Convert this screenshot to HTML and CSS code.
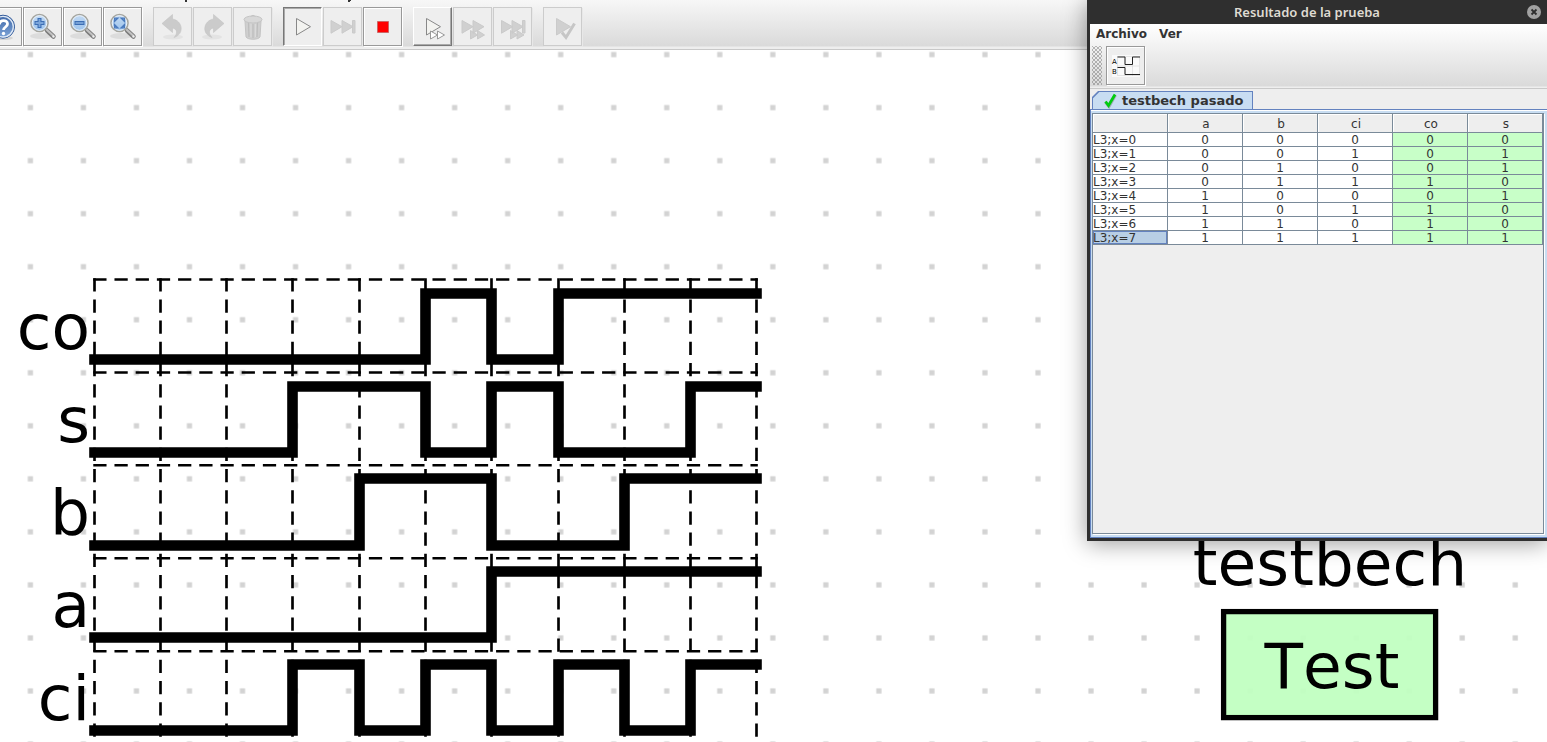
FILE: index.html
```html
<!DOCTYPE html>
<html lang="es">
<head>
<meta charset="utf-8">
<title>Resultado de la prueba</title>
<link rel="stylesheet" href="styles.css">
</head>
<body>
<svg class="defs" width="0" height="0" aria-hidden="true">
  <defs>
    <linearGradient id="lens" x1="0" y1="0" x2="0" y2="1"><stop offset="0" stop-color="#c3daf3"/><stop offset="1" stop-color="#9cc3ec"/></linearGradient>
    <linearGradient id="help" x1="0" y1="0" x2="0" y2="1"><stop offset="0" stop-color="#3f68a8"/><stop offset="1" stop-color="#7fa5d8"/></linearGradient>
    <g id="magnifier">
      <ellipse cx="18" cy="29" rx="11" ry="3" fill="#dcdcdc"/>
      <path d="M24 23.500L30.500 29.500" stroke="#7d7d7d" stroke-width="4.500" stroke-linecap="round"/>
      <path d="M24 23L30 28.500" stroke="#c2c2c2" stroke-width="2.200" stroke-linecap="round"/>
      <circle cx="30.500" cy="29.500" r="1.200" fill="#eee"/>
      <circle cx="16.500" cy="16" r="8.500" fill="url(#lens)" stroke="#a5a59e" stroke-width="1.600"/>
      <circle cx="16.500" cy="16" r="7.300" fill="none" stroke="#eef3f8" stroke-width="1"/>
    </g>
  </defs>
</svg>

<div class="app">
  <header class="toolbar">
    <svg class="menu-edge" viewBox="0 0 400 2" aria-hidden="true"><path d="M185 0h2v2h-2zM348 0h3v1h-1v1h-2z" fill="#333"/></svg>
    <button class="tool" aria-label="Ayuda"><svg viewBox="1 1 37 37"><ellipse cx="20" cy="31" rx="10" ry="2" fill="#d4d4d4"/><circle cx="20" cy="19.700" r="11.500" fill="url(#help)" stroke="#2f5797"/><circle cx="20" cy="19.700" r="10.300" fill="none" stroke="#dfe9f5" stroke-width="1.300"/><path d="M16.500 17.500c0-5 8-5 8-.5 0 3-4 3-4 6" fill="none" stroke="#fff" stroke-width="2.800"/><circle cx="20.500" cy="26.500" r="1.700" fill="#fff"/></svg></button>
    <button class="tool" aria-label="Ampliar"><svg viewBox="1 1 37 37"><use href="#magnifier"/><path d="M16.500 11v10M11.500 16h10" stroke="#3c6eb4" stroke-width="4"/><path d="M16.500 12v8M12.500 16h8" stroke="#7ba5da" stroke-width="1.800"/></svg></button>
    <button class="tool" aria-label="Reducir"><svg viewBox="1 1 37 37"><use href="#magnifier"/><path d="M11.500 16h10" stroke="#3c6eb4" stroke-width="4"/><path d="M12.500 16h8" stroke="#7ba5da" stroke-width="1.800"/></svg></button>
    <button class="tool" aria-label="Ajustar"><svg viewBox="1 1 37 37"><use href="#magnifier"/><path d="M11.500 14.500v-3.500h3.500zM21.500 14.500v-3.500h-3.500zM11.500 17.500v3.500h3.500zM21.500 17.500v3.500h-3.500z" fill="#6b98d0" stroke="#4a7abd" stroke-width="1.200"/></svg></button>

    <button class="tool off apart" disabled aria-label="Deshacer"><svg viewBox="1 1 37 37"><ellipse cx="20" cy="30" rx="10" ry="2.500" fill="#e3e3e3"/><path d="M9 16.500L19.500 7.500v4.500c10 1.500 12.500 15 1.500 18.500 4-4 3-9-1.500-9.500v4.500z" fill="#cbcbcb" stroke="#c4c4c4" stroke-width=".6"/></svg></button>
    <button class="tool off" disabled aria-label="Rehacer"><svg viewBox="1 1 37 37"><ellipse cx="19" cy="30" rx="10" ry="2.500" fill="#e3e3e3"/><path d="M31 16.500L20.500 7.500v4.500c-10 1.500-12.500 15-1.500 18.500-4-4-3-9 1.500-9.500v4.500z" fill="#cbcbcb" stroke="#c4c4c4" stroke-width=".6"/></svg></button>
    <button class="tool off" disabled aria-label="Eliminar"><svg viewBox="1 1 37 37"><path d="M12 14l1 16c2 3 12 3 14 0l1-16z" fill="#cfcfcf" stroke="#c4c4c4"/><path d="M15.500 16l.5 14M20 17v14M24.500 16l-.5 14" stroke="#bdbdbd" stroke-width="1.200"/><path d="M18 16v14M22.500 17v13" stroke="#dadada"/><ellipse cx="20" cy="12.500" rx="9" ry="3.500" fill="#d8d8d8" stroke="#c4c4c4"/><path d="M18 9.500c0-1.500 4-1.500 4 0" fill="none" stroke="#c4c4c4"/></svg></button>

    <button class="tool pressed apart" aria-label="Iniciar"><svg viewBox="1 1 37 37"><path d="M13.500 11.500L27.500 19.700L13.500 28z" fill="#f3f3f0" stroke="#888"/></svg></button>
    <button class="tool off" disabled aria-label="Paso"><svg viewBox="1 1 37 37"><path d="M8 13.500l11 6.200-11 6.500zM19 13.500l11 6.200-11 6.500zM29.500 13.500h2.500v12.500h-2.500z" fill="#d0d0d0" stroke="#cacaca"/></svg></button>
    <button class="tool" aria-label="Detener"><svg viewBox="1 1 37 37"><path d="M14.500 14.500h11v11h-11z" fill="#f00" stroke="#c66"/></svg></button>

    <button class="tool raised apart" aria-label="Ejecutar"><svg viewBox="1 1 37 37"><path d="M13.500 11.500L27.500 19.700L13.500 28z" fill="#f3f3f0" stroke="#888"/><path d="M17.500 24l7 4-7 4zM24.500 24l7 4-7 4z" fill="#fff" stroke="#999"/></svg></button>
    <button class="tool off" disabled aria-label="Avanzar"><svg viewBox="1 1 37 37"><path d="M9 13.500l11 6.200-11 6.500zM20 13.500l11 6.200-11 6.500zM17.500 23.500l7 4.500-7 4zM24.500 23.500l7 4.500-7 4z" fill="#d0d0d0" stroke="#cacaca"/></svg></button>
    <button class="tool off" disabled aria-label="Avanzar hasta el final"><svg viewBox="1 1 37 37"><path d="M8.500 13.500l11 6.200-11 6.500zM19 13.500l11 6.200-11 6.500zM29.500 13.500h2.500v12.500h-2.500zM17.500 23.500l7 4.500-7 4zM24 23.500l7 4.500-7 4z" fill="#d0d0d0" stroke="#cacaca"/></svg></button>

    <button class="tool off apart" disabled aria-label="Ejecutar pruebas"><svg viewBox="1 1 37 37"><path d="M13.500 11.500L27.500 19.700L13.500 28z" fill="#d0d0d0" stroke="#cacaca"/><path d="M19 25.500l4 5 8.500-14" fill="none" stroke="#c6c6c6" stroke-width="3"/></svg></button>
  </header>

  <main class="canvas">
    <svg class="circuit" role="img" aria-label="Circuito">
      <defs>
        <pattern id="dots" x="3.800" y="-22" width="53.030" height="53.030" patternUnits="userSpaceOnUse">
          <rect x="24" y="24" width="5.200" height="5.200" fill="#d3d3d3"/>
        </pattern>
      </defs>
      <rect width="100%" height="100%" fill="url(#dots)"/>
      <g class="guides">
        <path d="M94.600 229.500H756.500M94.600 322.500H756.500M94.600 415.200H756.500M94.600 508.200H756.500M94.600 601.200H756.500"/>
        <path d="M94.500 229.500V686M160.500 229.500V686M226.500 229.500V686M292.500 229.500V686M359.500 229.500V686M425.500 229.500V686M491.500 229.500V686M558.500 229.500V686M624.500 229.500V686M690.500 229.500V686M756.500 229.500V686"/>
      </g>
      <g class="waves">
        <path d="M94.500 309.500H425.500V243.500H491.500V309.500H558.500V243.500H756.500"/>
        <path d="M94.500 402.500H292.500V336.500H425.500V402.500H491.500V336.500H558.500V402.500H690.500V336.500H756.500"/>
        <path d="M94.500 495.500H359.500V428.500H491.500V495.500H624.500V428.500H756.500"/>
        <path d="M94.500 587.500H491.500V521.500H756.500"/>
        <path d="M94.500 680.500H292.500V614.500H359.500V680.500H425.500V614.500H491.500V680.500H558.500V614.500H624.500V680.500H690.500V614.500H756.500"/>
      </g>
      <g class="labels">
        <text x="90" y="299">co</text>
        <text x="90" y="392">s</text>
        <text x="90" y="484">b</text>
        <text x="90" y="577">a</text>
        <text x="90" y="670">ci</text>
      </g>
      <rect class="test-box" x="1223.600" y="561.600" width="212" height="106"/>
      <g class="labels centered">
        <text x="1330" y="535">testbech</text>
        <text x="1332" y="638">Test</text>
      </g>
    </svg>
  </main>
</div>

<section class="window" aria-labelledby="window-title">
  <div class="titlebar">
    <h1 id="window-title">Resultado de la prueba</h1>
    <button class="close" aria-label="Cerrar"><svg viewBox="0 0 14 14"><circle cx="7" cy="7" r="7" fill="#a2a2a2"/><path d="M4.500 4.500l5 5M9.500 4.500l-5 5" stroke="#2f2f2f" stroke-width="1.800"/></svg></button>
  </div>
  <div class="chrome">
    <nav class="menu"><button>Archivo</button><button>Ver</button></nav>
    <div class="window-tools">
      <span class="grip"></span>
      <button class="tool" aria-label="Mostrar gráfico"><svg viewBox="1 1 37 37"><path d="M6 9h28v22h-28z" fill="#fafafa"/><path d="M11.500 10.500h22v19h-22zM11.500 20h22M19 10.500v19M26.500 10.500v19" fill="none" stroke="#ccc" stroke-dasharray="1 1"/><path d="M11.500 11H19v7.500h7.500V11h7.500M11.500 21.500H19v7h15" fill="none" stroke="#222" stroke-width="1"/><text class="tiny" x="6" y="18">A</text><text class="tiny" x="6" y="28">B</text></svg></button>
    </div>
  </div>
  <div class="tabs">
    <button class="tab"><svg class="check" viewBox="0 0 14 16"><path d="M2.500 9l3.500 4.500L12.500 2" fill="none" stroke="#777" stroke-width="3" opacity=".5"/><path d="M2.500 8.500l3 4L12 1.500" fill="none" stroke="#0c1" stroke-width="2.800"/></svg>testbech pasado</button>
  </div>
  <div class="panel">
    <div class="scroll">
      <table>
        <thead><tr><th></th><th>a</th><th>b</th><th>ci</th><th>co</th><th>s</th></tr></thead>
        <tbody>
          <tr><td>L3;x=0</td><td>0</td><td>0</td><td>0</td><td class="ok">0</td><td class="ok">0</td></tr>
          <tr><td>L3;x=1</td><td>0</td><td>0</td><td>1</td><td class="ok">0</td><td class="ok">1</td></tr>
          <tr><td>L3;x=2</td><td>0</td><td>1</td><td>0</td><td class="ok">0</td><td class="ok">1</td></tr>
          <tr><td>L3;x=3</td><td>0</td><td>1</td><td>1</td><td class="ok">1</td><td class="ok">0</td></tr>
          <tr><td>L3;x=4</td><td>1</td><td>0</td><td>0</td><td class="ok">0</td><td class="ok">1</td></tr>
          <tr><td>L3;x=5</td><td>1</td><td>0</td><td>1</td><td class="ok">1</td><td class="ok">0</td></tr>
          <tr><td>L3;x=6</td><td>1</td><td>1</td><td>0</td><td class="ok">1</td><td class="ok">0</td></tr>
          <tr><td class="selected">L3;x=7</td><td>1</td><td>1</td><td>1</td><td class="ok">1</td><td class="ok">1</td></tr>
        </tbody>
      </table>
    </div>
  </div>
</section>
</body>
</html>
```
FILE: styles.css
```css
* { box-sizing: border-box; }
body {
  margin: 0;
  overflow: hidden;
  background: #fff;
  color: #333;
  font: 12px/14px "DejaVu Sans", sans-serif;
}
button {
  margin: 0;
  padding: 0;
  border: 0;
  background: none;
  color: inherit;
  font: inherit;
}
.defs { position: absolute; }

.app {
  display: flex;
  flex-direction: column;
  height: 100vh;
}
.toolbar {
  display: flex;
  flex: none;
  gap: 1px;
  height: 50px;
  padding-top: 7px;
  border-bottom: 1px solid #c9c9c9;
  background: linear-gradient(#f7f7f7, #dadada 46px, #eee 47px);
}
.menu-edge {
  position: absolute;
  top: 0;
  left: 0;
  width: 400px;
  height: 2px;
}
.menu-edge + .tool { margin-left: -17px; }
.toolbar .apart { margin-left: 10px; }
.tool {
  flex: none;
  width: 39px;
  height: 39px;
  border: 1px solid #999;
  background: #eee;
  box-shadow: inset 1px 1px #fff, 1px 1px #fff;
}
.tool svg {
  display: block;
  width: 37px;
  height: 37px;
}
.tool.off {
  border-color: #ccc;
  box-shadow: 1px 1px #e8e8e8;
}
.tool.pressed {
  border-color: #777 #fff #fff #777;
  box-shadow: inset 1px 1px #aaa;
}
.tool.raised {
  border-color: #fff #777 #777 #fff;
  box-shadow: inset -1px -1px #aaa;
}

.canvas { flex: 1; min-height: 0; }
.circuit {
  display: block;
  width: 100%;
  height: 100%;
}
.guides {
  fill: none;
  stroke: #000;
  stroke-width: 2.65px;
  stroke-linecap: square;
  stroke-dasharray: 10.6 10.6;
}
.waves {
  fill: none;
  stroke: #000;
  stroke-width: 10.6px;
  stroke-linecap: square;
}
.labels {
  fill: #000;
  font-size: 63px;
  font-kerning: none;
  text-anchor: end;
}
.centered { text-anchor: middle; }
.test-box {
  fill: rgba(192, 255, 192, .94);
  stroke: #000;
  stroke-width: 5.3px;
}

.window {
  position: absolute;
  top: 0;
  right: 0;
  display: flex;
  flex-direction: column;
  width: 460px;
  border: solid #2f2f2f;
  border-width: 0 0 3px 3px;
  background: #eee;
  box-shadow: 0 2px 22px rgba(0, 0, 0, .4);
}
.titlebar {
  display: grid;
  grid-template-columns: 1fr 20px;
  align-items: center;
  height: 24px;
  padding-right: 3px;
  background: #2f2f2f;
}
.titlebar h1 {
  margin: 0;
  color: #dfdbd2;
  font: 600 13px/16px "Noto Sans", "Open Sans", sans-serif;
  text-align: center;
}
.close svg {
  display: block;
  width: 14px;
  height: 14px;
  margin: auto;
}
.chrome {
  height: 65px;
  border-bottom: 1px solid #c9c9c9;
  background: linear-gradient(#fff, #dadada 62px, #eee 63px);
}
.menu {
  display: flex;
  gap: 12px;
  padding: 3px 6px 5px;
  font-weight: bold;
}
.window-tools {
  display: flex;
  gap: 4px;
  padding-left: 2px;
}
.grip {
  width: 10px;
  background:
    conic-gradient(#777 25%, transparent 0) -1px 1px / 4px 4px,
    conic-gradient(#777 25%, transparent 0) 1px 3px / 4px 4px;
  opacity: .5;
}
.tiny { font-size: 7px; }
.tabs {
  display: flex;
  height: 20px;
  padding: 2px 2px 0;
}
.tab {
  display: flex;
  align-items: center;
  gap: 5px;
  padding: 0 9px 0 10px;
  border: 1px solid #6382bf;
  border-bottom: 0;
  background: linear-gradient(135deg, #6382bf 4px, #c8ddf2 5px);
  clip-path: polygon(0 6px, 6px 0, 100% 0, 100% 100%, 0 100%);
  font-size: 13px;
  font-weight: bold;
}
.check {
  width: 14px;
  height: 16px;
}
.panel {
  padding: 3px 3px 3px 1px;
  border: solid #6382bf;
  border-width: 1px 0 1px 1px;
  background: #c8ddf2;
  box-shadow: inset 0 1px #fff;
}
.scroll {
  height: 421px;
  border: 1px solid #7a8a99;
  box-shadow: 1px 1px #fff;
  background: #eee;
}
table {
  width: 100%;
  border-spacing: 0;
  table-layout: fixed;
}
th, td {
  height: 14px;
  padding: 2px 0 0;
  border: solid #7a8a99;
  border-width: 0 1px 1px 0;
  line-height: 11px;
  text-align: center;
}
th {
  height: 19px;
  padding-left: 2px;
  background: #eee;
  box-shadow: inset 1px 1px #fff;
  font-weight: normal;
}
td { background: #fff; }
td:first-child { text-align: left; }
td.ok { background: #c8ffc8; }
td.selected {
  background: #b8cfe5;
  box-shadow: inset 0 0 0 1px #6382bf;
}
```
